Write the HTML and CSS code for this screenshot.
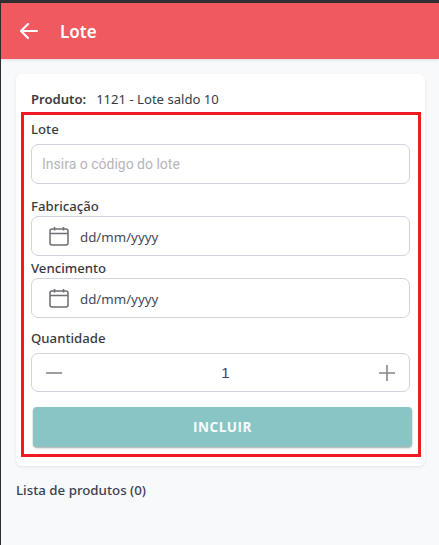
FILE: index.html
```html
<!DOCTYPE html>
<html lang="pt">
<head>
<meta charset="utf-8">
<title>Lote</title>
<link rel="stylesheet" href="styles.css">
</head>
<body>
<div class="window">
  <header class="appbar">
    <svg class="back" width="20" height="18" viewBox="0 0 20 18" fill="none" stroke="#fff" stroke-width="2.2" stroke-linecap="round" stroke-linejoin="round"><path d="M18 9H2M9 2 2 9l7 7"/></svg>
    <h1 class="title">Lote</h1>
  </header>
  <main class="content">
    <section class="card">
      <p class="product"><b>Produto:</b><span>1121 - Lote saldo 10</span></p>
      <form class="form">
        <label class="label label-lote">Lote</label>
        <div class="field"><span class="placeholder">Insira o código do lote</span></div>
        <label class="label label-fab">Fabricação</label>
        <div class="field date">
          <svg class="cal" width="20" height="20" viewBox="0 0 20 20" fill="none" stroke="#6e6e73" stroke-width="1.5"><rect x="1" y="3" width="18" height="16" rx="2"/><path d="M1 7.5h18M5.5 1v3.5M14.5 1v3.5"/></svg>
          <span class="date-text">dd/mm/yyyy</span>
        </div>
        <label class="label label-ven">Vencimento</label>
        <div class="field date">
          <svg class="cal" width="20" height="20" viewBox="0 0 20 20" fill="none" stroke="#6e6e73" stroke-width="1.5"><rect x="1" y="3" width="18" height="16" rx="2"/><path d="M1 7.5h18M5.5 1v3.5M14.5 1v3.5"/></svg>
          <span class="date-text">dd/mm/yyyy</span>
        </div>
        <label class="label label-qty">Quantidade</label>
        <div class="field stepper">
          <svg width="16" height="16" viewBox="0 0 16 16" stroke="#85878f" stroke-width="1.6"><path d="M0 8h16"/></svg>
          <span class="qty">1</span>
          <svg width="16" height="16" viewBox="0 0 16 16" stroke="#85878f" stroke-width="1.6"><path d="M0 8h16M8 0v16"/></svg>
        </div>
        <button class="submit" type="button">INCLUIR</button>
      </form>
    </section>
    <p class="list-title">Lista de produtos (0)</p>
  </main>
</div>
</body>
</html>
```
FILE: styles.css
```css
* { box-sizing: border-box; }
html, body { margin: 0; height: 100%; }
body {
  background: #2f2f31;
  font-family: "Noto Sans", sans-serif;
  overflow: hidden;
}
.window {
  margin: 3px 0 0 1px;
  height: 542px;
  background: #f8f9fb;
  display: flex;
  flex-direction: column;
}
.appbar {
  height: 56px;
  flex: none;
  background: #ef595f;
  display: flex;
  align-items: center;
  padding-left: 18px;
  box-shadow: 0 1px 3px rgba(0, 0, 0, .12);
}
.back { margin-right: 21px; }
.title {
  margin: 1px 0 0;
  color: #fff;
  font-size: 17px;
  font-weight: 600;
  line-height: 24px;
}
.content {
  padding: 15px 14px 0 15px;
}
.card {
  height: 392px;
  background: #fff;
  border-radius: 6px;
  box-shadow: 0 1px 3px rgba(20, 30, 60, .1);
  padding: 15px 0 0 5px;
}
.product {
  margin: 0 0 3px 10px;
  height: 20px;
  font-size: 13.1px;
  line-height: 20px;
  color: #363b4a;
  display: flex;
  gap: 10px;
}
.product b { font-weight: 600; color: #3a3a42; }
.form {
  width: 400px;
  height: 345px;
  border: 3px solid #ef1a26;
  padding: 0 0 0 7px;
  display: flex;
  flex-direction: column;
}
.label {
  font-size: 13.2px;
  font-weight: 500;
  line-height: 18px;
  color: #3a3a42;
}
.label-lote { margin-top: 5px; margin-bottom: 6px; }
.label-fab { margin-top: 13px; margin-bottom: 1px; }
.label-ven { margin-top: 3px; margin-bottom: 1px; }
.label-qty { margin-top: 11px; margin-bottom: 6px; }
.field {
  width: 379px;
  height: 40px;
  flex: none;
  border: 1px solid #d2d3dc;
  border-radius: 7px;
  background: #fff;
  display: flex;
  align-items: center;
}
.placeholder {
  margin-left: 10px;
  font-family: Roboto, sans-serif;
  font-size: 14px;
  color: #b4b6bd;
}
.date { padding-left: 17px; }
.cal { margin-right: 11px; }
.date-text {
  font-size: 13.3px;
  line-height: 20px;
  padding-top: 2px;
  color: #434859;
}
.stepper {
  height: 39px;
  justify-content: space-between;
  padding: 0 14px;
}
.qty {
  margin-left: 10px;
  font-family: "Liberation Sans", sans-serif;
  font-size: 15px;
  color: #3a4260;
}
.submit {
  width: 379px;
  height: 40px;
  flex: none;
  margin: 15px 0 0 2px;
  border: 0;
  border-radius: 4px;
  background: #8ac5c5;
  box-shadow: 0 1px 2px rgba(0, 0, 0, .35);
  color: #f6fcfc;
  font-family: "Open Sans", sans-serif;
  font-size: 13.5px;
  font-weight: 700;
  letter-spacing: .5px;
}
.list-title {
  margin: 14px 0 0;
  font-size: 13.3px;
  line-height: 20px;
  font-weight: 500;
  color: #3a3f4f;
}
```
